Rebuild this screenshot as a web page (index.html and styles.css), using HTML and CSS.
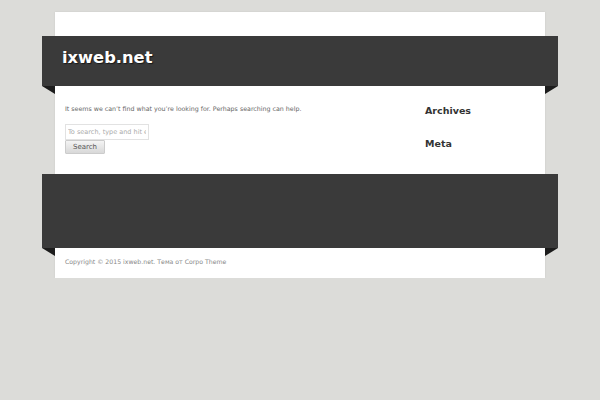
FILE: index.html
```html
<!DOCTYPE html>
<html>
<head>
<meta charset="utf-8">
<link rel="stylesheet" href="styles.css">
</head>
<body>
<div class="page">
  <div class="band header">
    <div class="site-title">ixweb.net</div>
  </div>
  <div class="content">
    <div class="main">
      <p class="notice">It seems we can’t find what you’re looking for. Perhaps searching can help.</p>
      <form class="search">
        <input class="search-input" type="text" placeholder="To search, type and hit enter">
        <button class="search-btn" type="button">Search</button>
      </form>
    </div>
    <div class="sidebar">
      <h3 class="widget-title">Archives</h3>
      <h3 class="widget-title">Meta</h3>
    </div>
  </div>
  <div class="band footer-band"></div>
  <div class="copyright">Copyright © 2015 ixweb.net. Тема от Corpo Theme</div>
</div>
</body>
</html>
```
FILE: styles.css
```css
html, body {
  margin: 0;
  padding: 0;
}
body {
  background: #dcdcd9;
  font-family: "DejaVu Sans", Verdana, sans-serif;
}
.page {
  width: 490px;
  margin: 12px auto 0;
  background: #fff;
  padding-top: 24px;
  box-shadow: 0 0 2px rgba(0,0,0,0.08);
}
.band {
  position: relative;
  margin: 0 -13px;
  background: #3a3a3a;
}
.band::before,
.band::after {
  content: "";
  position: absolute;
  top: 100%;
  width: 0;
  height: 0;
  border-top: 8px solid #1c1c1c;
}
.band::before {
  left: 0;
  border-left: 13px solid transparent;
}
.band::after {
  right: 0;
  border-right: 13px solid transparent;
}
.header {
  height: 50px;
  display: flex;
  align-items: center;
  padding-left: 20px;
}
.site-title {
  color: #fff;
  font-weight: bold;
  font-size: 16.3px;
  text-shadow: 1px 1px 1px rgba(0,0,0,0.6);
  margin-top: -8px;
}
.content {
  display: flex;
  padding: 18px 10px 19px;
  height: 51px;
}
.main {
  width: 360px;
}
.notice {
  margin: 0;
  font-size: 6.3px;
  color: #666;
  line-height: 10px;
}
.search {
  margin-top: 10px;
  display: flex;
  flex-direction: column;
  align-items: flex-start;
}
.search-input {
  box-sizing: border-box;
  width: 84px;
  height: 16px;
  border: 1px solid #e2e2e2;
  padding: 0 2px;
  font-family: "DejaVu Sans", sans-serif;
  font-size: 6.5px;
  color: #999;
  margin: 0;
  outline: none;
}
.search-input::placeholder {
  color: #aaa;
}
.search-btn {
  box-sizing: border-box;
  width: 40px;
  height: 14px;
  margin: 0;
  padding: 0;
  border: 1px solid #ccc;
  border-radius: 1px;
  background: linear-gradient(#f4f4f4, #d8d8d8);
  font-family: "DejaVu Sans", sans-serif;
  font-size: 7px;
  color: #555;
}
.sidebar {
  margin-left: 0;
  padding-top: 0;
}
.widget-title {
  margin: 0 0 19px;
  font-size: 9.5px;
  font-weight: bold;
  color: #333;
  line-height: 14px;
}
.footer-band {
  height: 74px;
}
.copyright {
  height: 30px;
  padding-left: 10px;
  padding-bottom: 3px;
  box-sizing: border-box;
  display: flex;
  align-items: center;
  font-size: 6.2px;
  color: #888;
}
```
